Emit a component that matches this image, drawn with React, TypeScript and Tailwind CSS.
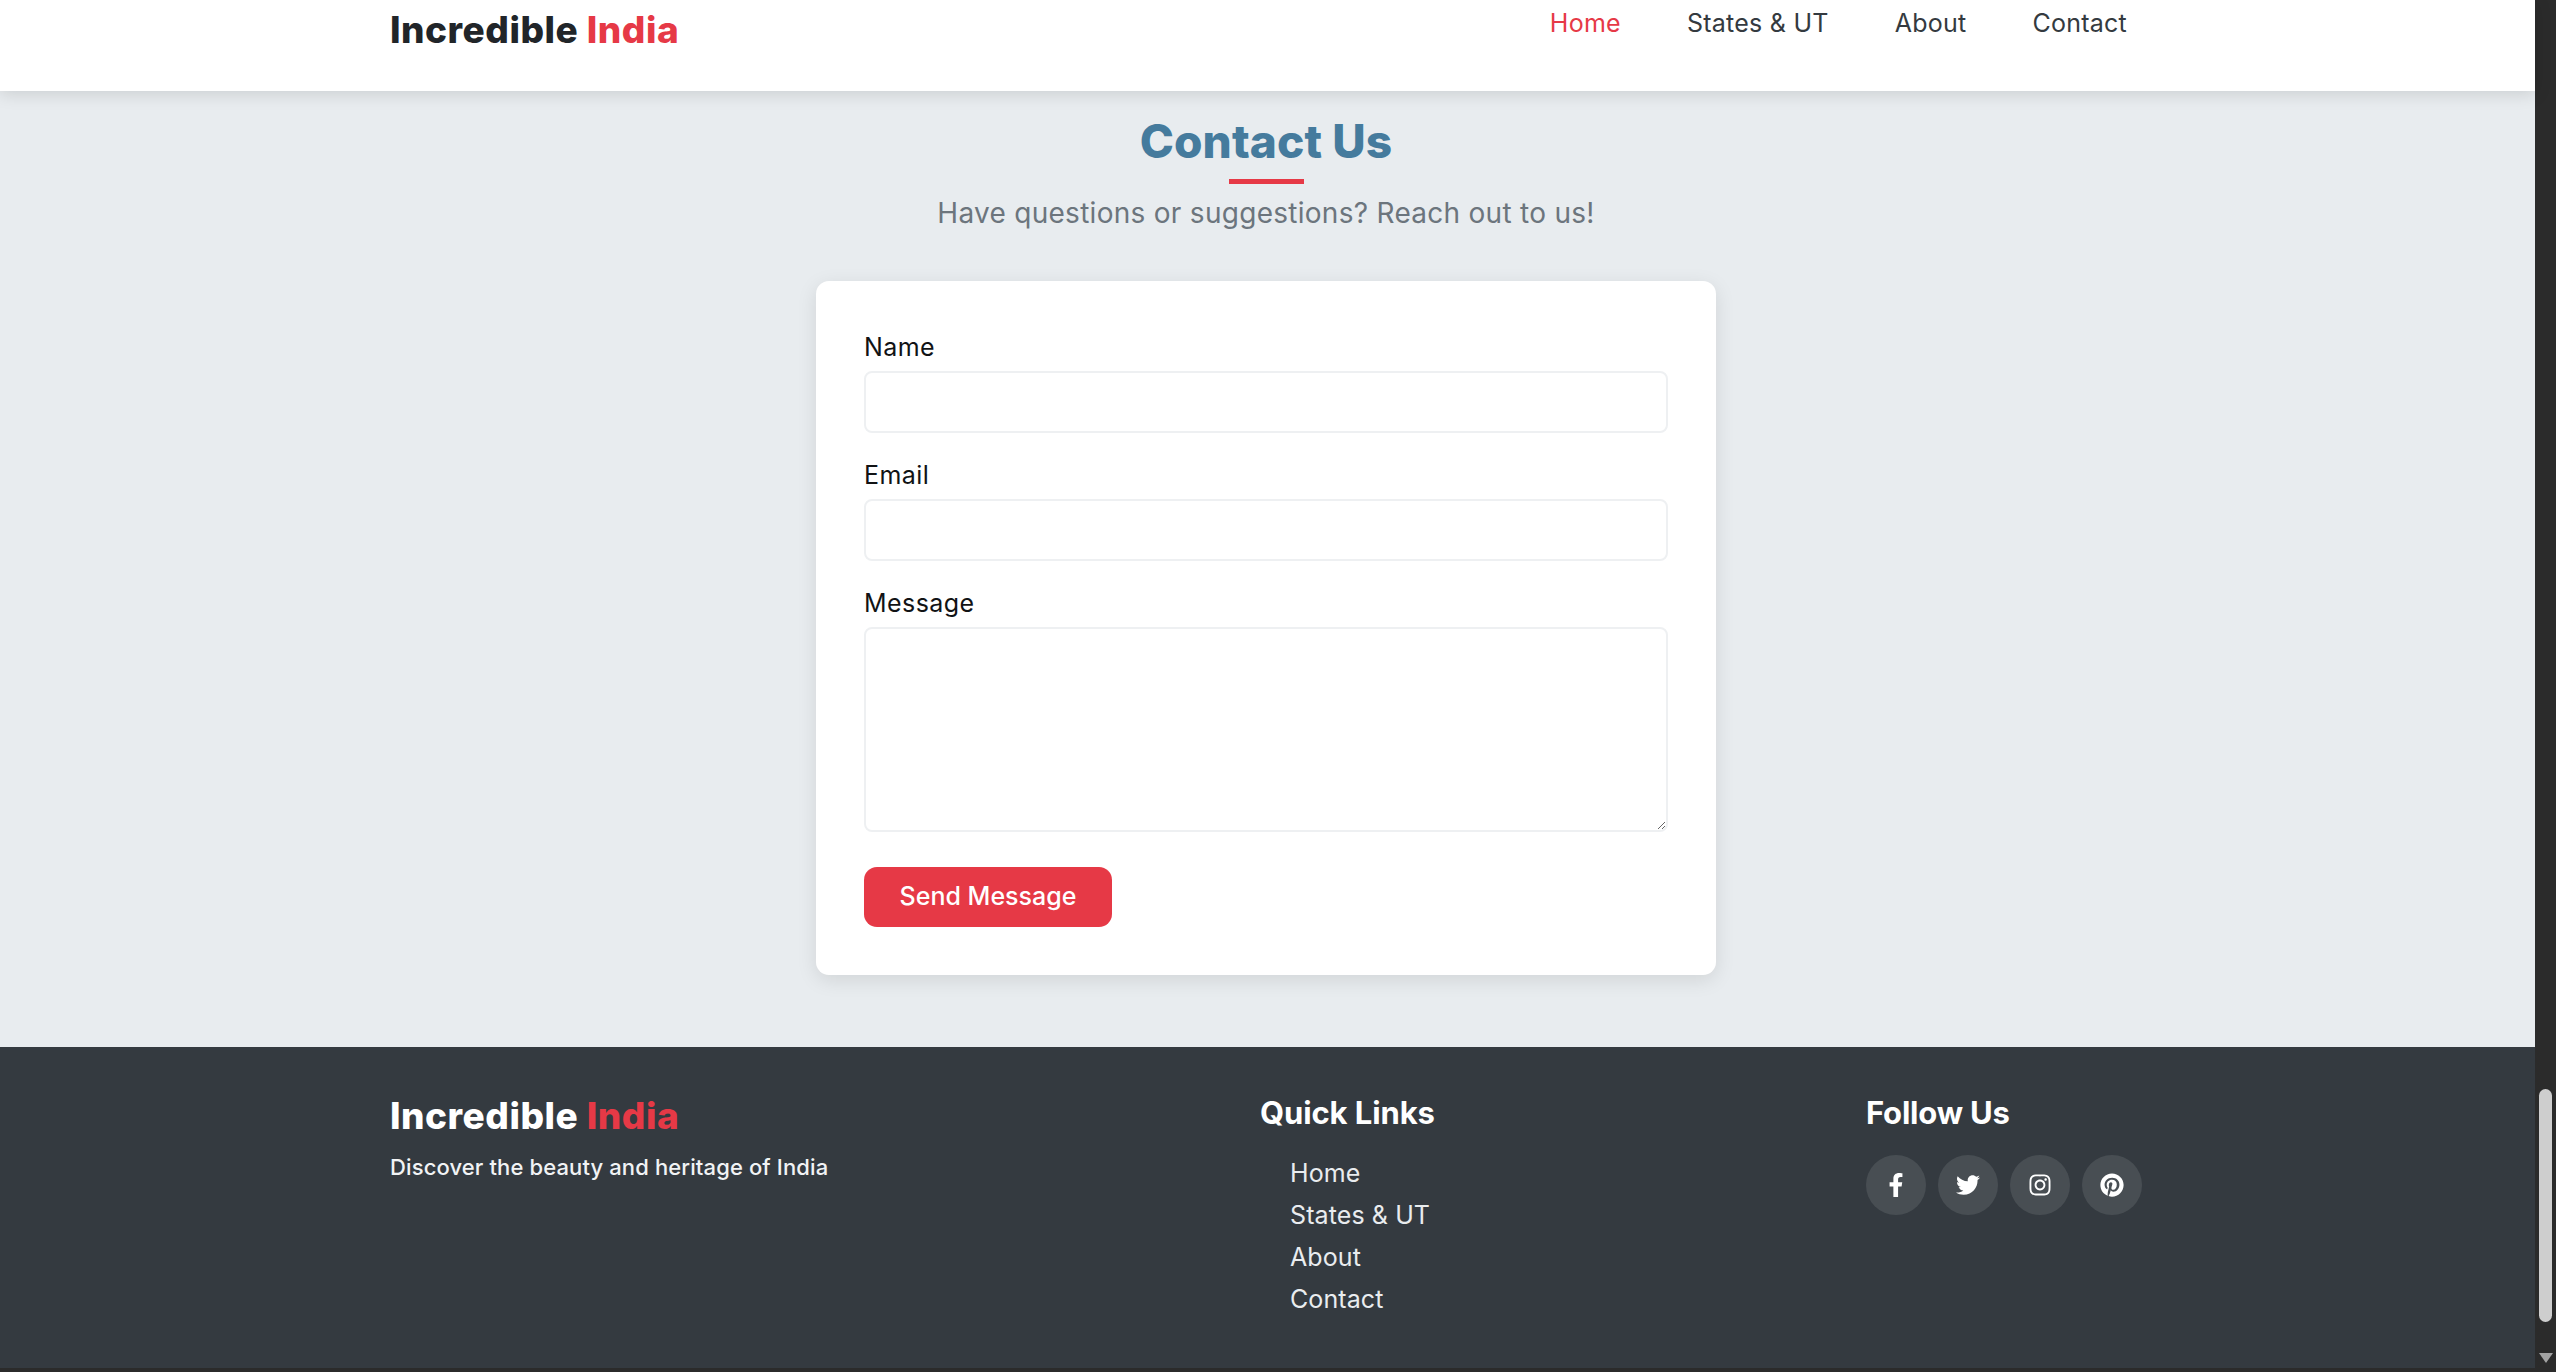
import React from "react";
import { FaFacebookF, FaInstagram, FaPinterest, FaTwitter } from "react-icons/fa";

const navLinks = ["Home", "States & UT", "About", "Contact"];
const footerLinks = ["Home", "States & UT", "About", "Contact"];

const Logo = ({ dark }: { dark?: boolean }) => (
  <div className={`text-[37px] leading-[46px] font-extrabold tracking-[0.5px] ${dark ? "text-white" : "text-[#212529]"}`}>
    Incredible <span className="text-[#e63946]">India</span>
  </div>
);

const Field = ({ label, multiline }: { label: string; multiline?: boolean }) => (
  <div className="mb-[26px]">
    <label className="mb-[8px] block text-[25px] leading-[32px] font-normal tracking-[0.45px] text-[#111315]">{label}</label>
    {multiline ? (
      <textarea className="block h-[205px] w-full rounded-[8px] border-2 border-[#eef0f2] bg-white" />
    ) : (
      <input className="block h-[62px] w-full rounded-[8px] border-2 border-[#eef0f2] bg-white" />
    )}
  </div>
);

export default function App() {
  return (
    <div className="flex h-[1372px] w-full overflow-hidden bg-[#2b2b2b] font-['Inter',sans-serif]">
      <div className="flex h-[1368px] min-w-0 flex-1 flex-col bg-[#e8ecef]">
        {/* Navbar */}
        <header className="relative z-10 h-[91px] bg-white shadow-[0_3px_16px_rgba(0,0,0,0.13)]">
          <div className="mx-auto flex w-[1755px] items-start justify-between">
            <div className="pt-[7px]">
              <Logo />
            </div>
            <nav className="flex gap-[66px] pt-[8px] pr-[18px] text-[25px] leading-[31px] tracking-[0.25px] text-[#343a40]">
              {navLinks.map((link, i) => (
                <a key={link} className={i === 0 ? "text-[#e63946]" : ""}>
                  {link}
                </a>
              ))}
            </nav>
          </div>
        </header>

        {/* Contact form */}
        <main className="flex flex-1 flex-col items-center pt-[21px] pr-[3px]">
          <h2 className="text-[46px] leading-[58px] font-extrabold tracking-[0.1px] text-[#457b9d]">Contact Us</h2>
          <div className="mt-[9px] h-[5px] w-[75px] bg-[#e63946]" />
          <p className="mt-[11px] text-[28px] leading-[36px] tracking-[0.28px] text-[#6c757d]">
            Have questions or suggestions? Reach out to us!
          </p>
          <div className="mt-[50px] w-[900px] rounded-[13px] bg-white px-[48px] pt-[50px] shadow-[0_5px_20px_rgba(0,0,0,0.1)]">
            <Field label="Name" />
            <Field label="Email" />
            <Field label="Message" multiline />
            <button className="mt-[9px] mb-[48px] h-[60px] w-[248px] rounded-[13px] bg-[#e63946] text-[25px] font-medium text-white">
              Send Message
            </button>
          </div>
        </main>

        {/* Footer */}
        <footer className="h-[321px] bg-[#343a40] text-white">
          <div className="mx-auto grid w-[1755px] grid-cols-[870px_606px_1fr] pt-[46px]">
            <div>
              <Logo dark />
              <p className="mt-[13px] text-[22px] leading-[30px] font-[450] tracking-[0.12px] text-[#f1f3f5]">Discover the beauty and heritage of India</p>
            </div>
            <div>
              <h3 className="text-[31px] leading-[39px] font-bold tracking-[-0.1px]">Quick Links</h3>
              <ul className="mt-[20px] pl-[30px] text-[25px] tracking-[0.1px] text-[#e9ecef]">
                {footerLinks.map((link) => (
                  <li key={link} className="h-[42px] leading-[42px]">
                    {link}
                  </li>
                ))}
              </ul>
            </div>
            <div>
              <h3 className="text-[31px] leading-[39px] font-bold tracking-[-0.2px]">Follow Us</h3>
              <div className="mt-[23px] flex gap-[12px]">
                {[FaFacebookF, FaTwitter, FaInstagram, FaPinterest].map((Icon, i) => (
                  <a key={i} className="flex h-[60px] w-[60px] items-center justify-center rounded-full bg-[#484e53]">
                    <Icon className="h-[24px] w-[24px] text-white" />
                  </a>
                ))}
              </div>
            </div>
          </div>
        </footer>
      </div>

      {/* Window scrollbar */}
      <div className="flex h-[1368px] w-[21px] shrink-0 flex-col items-center bg-[#2b2b2b]">
        <div className="mt-[1089px] h-[233px] w-[13px] rounded-full bg-[#cecece]" />
        <div className="mt-[31px] h-0 w-0 border-x-[7px] border-t-[10px] border-x-transparent border-t-[#a3a3a3]" />
      </div>
    </div>
  );
}
